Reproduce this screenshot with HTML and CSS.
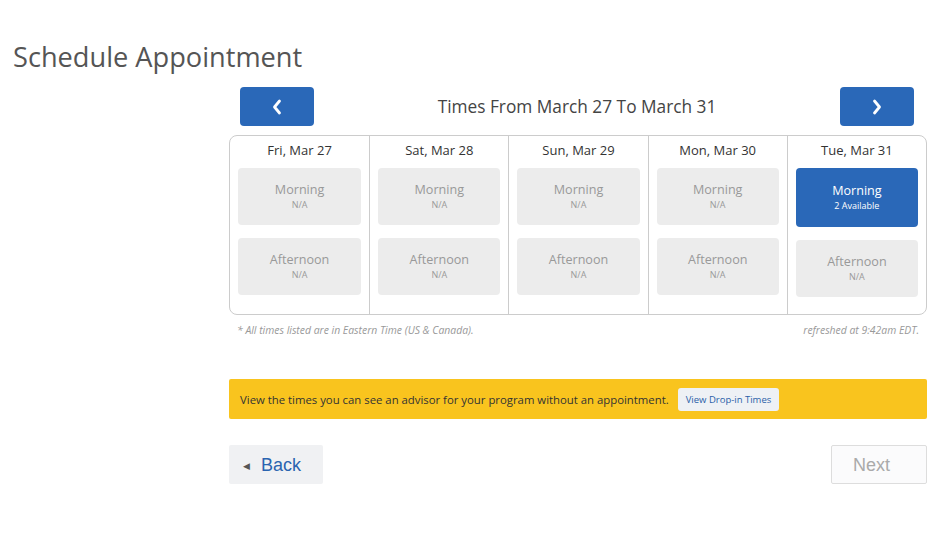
FILE: index.html
```html
<!DOCTYPE html>
<html lang="en">
<head>
    <meta charset="UTF-8">
    <title>Schedule Appointment</title>
    <link rel="stylesheet" href="styles.css">
</head>
<body>
    <h1 class="page-title">Schedule Appointment</h1>
    <main class="scheduler">
        <div class="range-bar">
            <button class="range-btn" aria-label="Previous">
                <svg width="10" height="16" viewBox="0 0 10 16"><path d="M7.5 2 L2.5 8 L7.5 14" fill="none" stroke="#fff" stroke-width="2.8" stroke-linecap="round" stroke-linejoin="round"/></svg>
            </button>
            <h2 class="range-title">Times From March 27 To March 31</h2>
            <button class="range-btn" aria-label="Next">
                <svg width="10" height="16" viewBox="0 0 10 16"><path d="M2.5 2 L7.5 8 L2.5 14" fill="none" stroke="#fff" stroke-width="2.8" stroke-linecap="round" stroke-linejoin="round"/></svg>
            </button>
        </div>

        <div class="calendar">
            <div class="day">
                <div class="day-name">Fri, Mar 27</div>
                <div class="slot"><span class="slot-name">Morning</span><span class="slot-info">N/A</span></div>
                <div class="slot"><span class="slot-name">Afternoon</span><span class="slot-info">N/A</span></div>
            </div>
            <div class="day">
                <div class="day-name">Sat, Mar 28</div>
                <div class="slot"><span class="slot-name">Morning</span><span class="slot-info">N/A</span></div>
                <div class="slot"><span class="slot-name">Afternoon</span><span class="slot-info">N/A</span></div>
            </div>
            <div class="day">
                <div class="day-name">Sun, Mar 29</div>
                <div class="slot"><span class="slot-name">Morning</span><span class="slot-info">N/A</span></div>
                <div class="slot"><span class="slot-name">Afternoon</span><span class="slot-info">N/A</span></div>
            </div>
            <div class="day">
                <div class="day-name">Mon, Mar 30</div>
                <div class="slot"><span class="slot-name">Morning</span><span class="slot-info">N/A</span></div>
                <div class="slot"><span class="slot-name">Afternoon</span><span class="slot-info">N/A</span></div>
            </div>
            <div class="day">
                <div class="day-name">Tue, Mar 31</div>
                <div class="slot open"><span class="slot-name">Morning</span><span class="slot-info">2 Available</span></div>
                <div class="slot"><span class="slot-name">Afternoon</span><span class="slot-info">N/A</span></div>
            </div>
        </div>

        <div class="notes">
            <span>* All times listed are in Eastern Time (US &amp; Canada).</span>
            <span>refreshed at 9:42am EDT.</span>
        </div>

        <div class="dropin">
            <span>View the times you can see an advisor for your program without an appointment.</span>
            <button class="dropin-btn">View Drop-in Times</button>
        </div>

        <div class="steps">
            <button class="step-btn back"><span class="arrow">&#9664;</span>Back</button>
            <button class="step-btn next">Next</button>
        </div>
    </main>
</body>
</html>
```

FILE: styles.css
```css
body {
    font-family: "Open Sans", Arial, sans-serif;
    margin: 0;
    padding: 0;
    background: #fff;
    color: #444;
}
.page-title {
    font-size: 27.2px;
    font-weight: 400;
    color: #555;
    margin: 0;
    padding: 38px 0 0 13px;
    line-height: 38px;
}
.scheduler {
    width: 698px;
    margin: 11px 0 0 229px;
}
.range-bar {
    display: flex;
    align-items: center;
    justify-content: space-between;
    padding: 0 13px 0 11px;
}
.range-btn {
    display: flex;
    align-items: center;
    justify-content: center;
    width: 74px;
    height: 39px;
    background: #2a68b8;
    border: none;
    border-radius: 4px;
    padding: 0;
}
.range-title {
    font-size: 17.3px;
    font-weight: 400;
    color: #444;
    margin: 0;
}
.calendar {
    display: grid;
    grid-template-columns: repeat(5, 1fr);
    border: 1px solid #ccc;
    border-radius: 8px;
    margin-top: 9px;
}
.day {
    padding: 0 8px 17px;
    border-left: 1px solid #ccc;
}
.day:first-child {
    border-left: none;
}
.day-name {
    text-align: center;
    font-size: 13px;
    line-height: 18px;
    color: #333;
    padding: 5px 0 9px;
}
.slot {
    display: flex;
    flex-direction: column;
    align-items: center;
    justify-content: center;
    box-sizing: border-box;
    height: 57px;
    padding-bottom: 2px;
    background: #ececec;
    border-radius: 4px;
    color: #999;
    margin-bottom: 13px;
}
.slot:last-child {
    margin-bottom: 0;
}
.slot.open {
    background: #2a68b8;
    color: #fff;
    height: 59px;
}
.slot-name {
    font-size: 12.6px;
    line-height: normal;
}
.slot-info {
    font-size: 9px;
    line-height: normal;
}
.notes {
    display: flex;
    justify-content: space-between;
    padding: 0 8px;
    margin-top: 8px;
    font-size: 10.4px;
    font-style: italic;
    color: #999;
}
.dropin {
    display: flex;
    align-items: center;
    gap: 9px;
    height: 40px;
    padding: 0 11px;
    margin-top: 42px;
    background: #f9c41e;
    border-radius: 2px;
    font-size: 11.35px;
    color: #333;
}
.dropin-btn {
    background: #eef1f5;
    color: #2a5fa8;
    border: none;
    border-radius: 3px;
    font-family: "Open Sans", Arial, sans-serif;
    font-size: 9.5px;
    height: 23px;
    padding: 0 8px;
}
.steps {
    display: flex;
    justify-content: space-between;
    margin-top: 26px;
}
.step-btn {
    height: 39px;
    font-family: "Liberation Sans", Arial, sans-serif;
    font-size: 18px;
    border-radius: 2px;
    text-align: left;
    padding-top: 3px;
}
.back {
    width: 94px;
    background: #f0f1f3;
    border: none;
    color: #2a64b0;
    padding-left: 14px;
}
.back .arrow {
    font-size: 9px;
    color: #555;
    margin-right: 11px;
    vertical-align: 2px;
}
.next {
    width: 96px;
    background: #fbfbfc;
    border: 1px solid #ddd;
    color: #aaa;
    padding-left: 21px;
}
```
